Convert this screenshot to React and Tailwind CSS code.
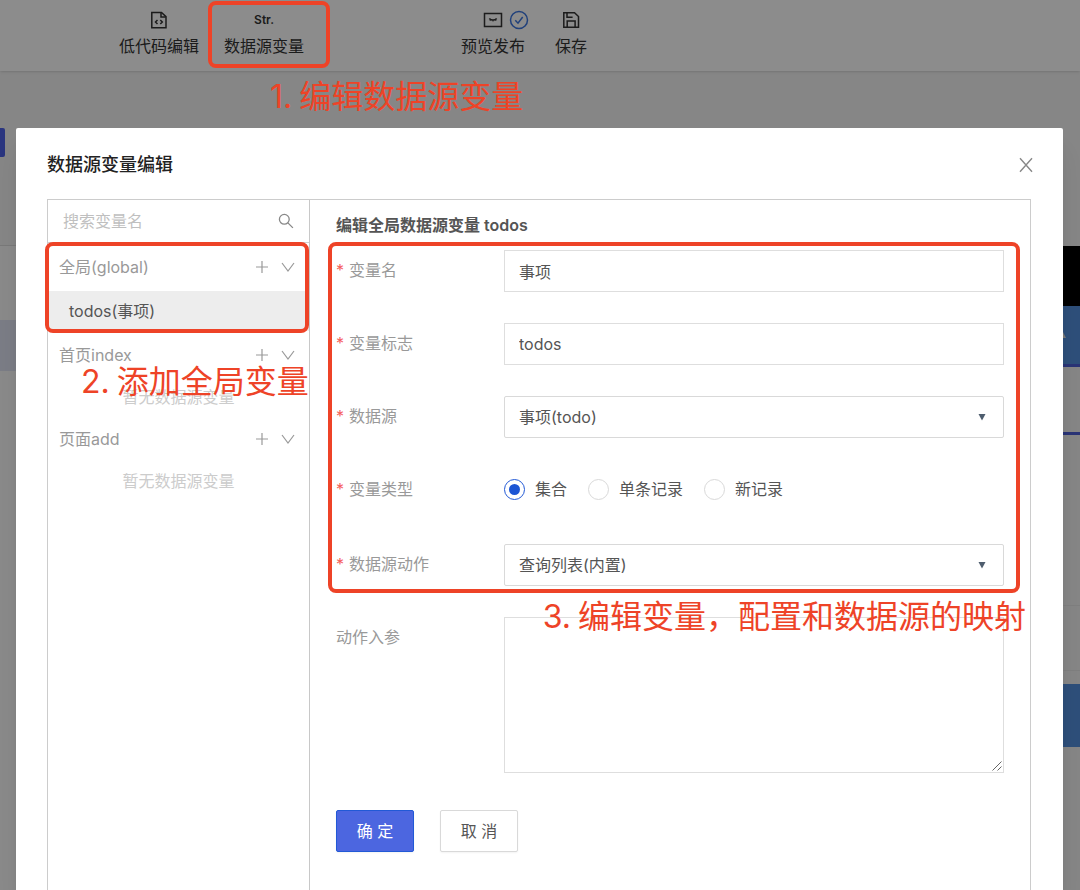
import { useState } from "react";

const RADIO_OPTIONS = [
  { value: "collection", label: "集合" },
  { value: "record", label: "单条记录" },
  { value: "new", label: "新记录" },
];

function CodeFileIcon() {
  return (
    <svg width="18" height="18" viewBox="0 0 18 18" fill="none" stroke="currentColor" strokeWidth="1.5">
      <path d="M1.800 1.500h9.700L16 5.700v11H1.800z" />
      <path d="M11 1.500V6h4.800" />
      <path d="M7.500 9 5.500 11l2 2M10.300 9l2 2-2 2" />
    </svg>
  );
}

function PreviewIcon() {
  return (
    <svg width="20" height="18" viewBox="0 0 20 18" fill="none" stroke="currentColor" strokeWidth="1.500">
      <path d="M1.500 2.500h17v13h-17z" />
      <path d="M6.300 7.400c1 1.200 2.200 1.700 3.700 1.700s2.700-.5 3.700-1.700" />
      <path d="M7.600 8.600 7 9.800M10 9v1.500M12.400 8.600l.6 1.200" strokeWidth="1" />
    </svg>
  );
}

function PublishedIcon() {
  return (
    <svg width="20" height="20" viewBox="0 0 20 20" fill="none" stroke="#3b76e0" strokeWidth="1.500">
      <circle cx="10" cy="10" r="8.500" />
      <path d="m6.300 10.300 2.700 2.900 4.700-6.200" />
    </svg>
  );
}

function SaveIcon() {
  return (
    <svg width="18" height="18" viewBox="0 0 18 18" fill="none" stroke="currentColor" strokeWidth="1.500">
      <path d="M1.800 1.700h10.700l4 3.800v10.800H1.800z" />
      <path d="M5.200 16.300V10h7.900v6.300M5 1.700v4.500h5.600" />
    </svg>
  );
}

function PlusIcon() {
  return (
    <svg width="14" height="14" viewBox="0 0 14 14" fill="none" stroke="currentColor" strokeWidth="1.200">
      <path d="M7 1v12M1 7h12" />
    </svg>
  );
}

function ChevronIcon() {
  return (
    <svg width="14" height="14" viewBox="0 0 14 14" fill="none" stroke="currentColor" strokeWidth="1.200">
      <path d="m1 3 6 8 6-8" />
    </svg>
  );
}

function SearchIcon() {
  return (
    <svg width="16" height="16" viewBox="0 0 16 16" fill="none" stroke="currentColor" strokeWidth="1.300">
      <circle cx="6.300" cy="6.300" r="4.900" />
      <path d="m9.900 9.900 5 5" />
    </svg>
  );
}

function CloseIcon() {
  return (
    <svg width="16" height="16" viewBox="0 0 16 16" fill="none" stroke="currentColor" strokeWidth="1.400">
      <path d="m2 1.300 12 13.400M14 1.300 2 14.700" />
    </svg>
  );
}

function ToolbarButton({ icon, badge, label }) {
  return (
    <button type="button" className="flex flex-col items-center gap-1 whitespace-nowrap">
      <span className="relative flex h-5 items-center">
        {icon}
        {badge && <span className="absolute top-0 left-full ml-1.5">{badge}</span>}
      </span>
      <span className="leading-6">{label}</span>
    </button>
  );
}

function StepNote({ number, children }) {
  return (
    <p className="flex gap-[7px] text-[32px] leading-10 whitespace-nowrap text-[#ee4327]">
      <span>{number}.</span>
      <span>{children}</span>
    </p>
  );
}

function VariableGroup({ title, children }) {
  return (
    <section>
      <div className="flex h-12 items-center justify-between pr-[14px] pl-[11px] text-[#999]">
        <h3>{title}</h3>
        <div className="flex gap-3">
          <button type="button" aria-label={`添加 ${title}`}>
            <PlusIcon />
          </button>
          <button type="button" aria-label={`展开 ${title}`}>
            <ChevronIcon />
          </button>
        </div>
      </div>
      {children}
    </section>
  );
}

function EmptyHint() {
  return <p className="h-9 text-center leading-9 text-[#ccc]">暂无数据源变量</p>;
}

function FieldLabel({ htmlFor, required, children }) {
  return (
    <label htmlFor={htmlFor} className="w-[168px] shrink-0 leading-10 text-[#999]">
      {required && <span className="mr-[5px] text-[#f5605c]">*</span>}
      {children}
    </label>
  );
}

function SelectBox({ id, options }) {
  return (
    <div className="relative flex-1">
      <select
        id={id}
        className="h-[42px] w-full appearance-none rounded-xs border border-[#d9d9d9] bg-white px-[14px] outline-none"
      >
        {options.map((option) => (
          <option key={option}>{option}</option>
        ))}
      </select>
      <svg
        className="pointer-events-none absolute top-[18px] right-[18px]"
        width="8"
        height="7"
        viewBox="0 0 8 7"
        fill="#4e5d6e"
      >
        <path d="M.5 0h7L4 6.500z" />
      </svg>
    </div>
  );
}

// The editor page that sits under the modal mask
function EditorPage() {
  return (
    <div className="flex h-full flex-col bg-[#f4f4f4]">
      <header className="flex h-[71px] shrink-0 items-start bg-white pt-[10px] pl-[119px] text-[#333] shadow-sm">
        <ToolbarButton icon={<CodeFileIcon />} label="低代码编辑" />
        <div className="ml-[25px]">
          <ToolbarButton
            icon={<span className="text-xs font-semibold">Str.</span>}
            label="数据源变量"
          />
        </div>
        <div className="ml-[157px] flex gap-[30px]">
          <ToolbarButton icon={<PreviewIcon />} badge={<PublishedIcon />} label="预览发布" />
          <ToolbarButton icon={<SaveIcon />} label="保存" />
        </div>
      </header>
      <div className="flex flex-1 justify-between">
        <aside className="flex w-4 flex-col">
          <div className="mt-[57px] h-[29px] w-[5px] rounded-r-xs bg-[#4e62e8]" />
          <div className="mt-[88px] h-[75px] border-t border-[#ddd] bg-[#fcfcfc]" />
          <div className="h-[51px] bg-[#e0e3f4]" />
          <div className="flex-1 bg-[#fcfcfc]" />
        </aside>
        <aside className="flex w-[17px] flex-col">
          <div className="mt-[175px] h-[60px] bg-black" />
          <div className="flex h-[58px] items-center bg-[#5490df]">
            <svg width="3" height="8" viewBox="0 0 3 8" fill="#ddd">
              <path d="M0 1l3 6H0z" />
            </svg>
          </div>
          <div className="h-[71px] border-y-3 border-[#4e5fd8]" />
          <div className="mt-[170px] h-[66px] border-y border-[#e8e8e8]" />
          <div className="mt-[13px] h-[63px] bg-[#5490df]" />
        </aside>
      </div>
    </div>
  );
}

function Sidebar() {
  return (
    <aside className="w-[262px] shrink-0 border-r border-[#c8c8c8]">
      <div className="flex h-[43px] items-center border-b border-[#d0d0d0] px-[15px] text-[#888]">
        <input
          type="search"
          aria-label="搜索变量名"
          placeholder="搜索变量名"
          className="min-w-0 flex-1 outline-none placeholder:text-[#bfbfbf]"
        />
        <button type="button" aria-label="搜索">
          <SearchIcon />
        </button>
      </div>
      <div className="relative">
        <VariableGroup title="全局(global)">
          <button type="button" className="block h-10 w-full bg-[#ededed] pl-[21px] text-left text-[#555]">
            todos(事项)
          </button>
        </VariableGroup>
        <div className="pointer-events-none absolute -top-px right-0 -bottom-0.5 -left-[3px] rounded-lg border-4 border-[#ee4327]" />
      </div>
      <div className="relative">
        <VariableGroup title="首页index">
          <EmptyHint />
        </VariableGroup>
        <div className="pointer-events-none absolute top-[31px] left-[33px]">
          <StepNote number={2}>添加全局变量</StepNote>
        </div>
      </div>
      <VariableGroup title="页面add">
        <EmptyHint />
      </VariableGroup>
    </aside>
  );
}

function VariableForm() {
  const [type, setType] = useState("collection");

  return (
    <form className="min-w-0 flex-1 px-[26px]" onSubmit={(e) => e.preventDefault()}>
      <h3 className="h-[50px] leading-[50px] font-semibold">编辑全局数据源变量 todos</h3>

      <div className="relative flex flex-col gap-[31px]">
        <div className="flex">
          <FieldLabel htmlFor="name" required>变量名</FieldLabel>
          <input
            id="name"
            defaultValue="事项"
            className="h-[42px] min-w-0 flex-1 border border-[#dedede] px-[14px] outline-none"
          />
        </div>
        <div className="flex">
          <FieldLabel htmlFor="key" required>变量标志</FieldLabel>
          <input
            id="key"
            defaultValue="todos"
            className="h-[42px] min-w-0 flex-1 border border-[#dedede] px-[14px] outline-none"
          />
        </div>
        <div className="flex">
          <FieldLabel htmlFor="source" required>数据源</FieldLabel>
          <SelectBox id="source" options={["事项(todo)"]} />
        </div>
        <div className="flex h-11">
          <FieldLabel htmlFor="type-collection" required>变量类型</FieldLabel>
          <div className="flex h-10 items-center gap-[21px]">
            {RADIO_OPTIONS.map((option) => (
              <label key={option.value} className="flex items-center gap-[10px]">
                <input
                  type="radio"
                  name="type"
                  id={`type-${option.value}`}
                  checked={type === option.value}
                  onChange={() => setType(option.value)}
                  className="grid size-[21px] appearance-none place-items-center rounded-full border border-[#d9d9d9] before:size-[11px] before:rounded-full checked:border-[#2259d6] checked:before:bg-[#1c55d4]"
                />
                {option.label}
              </label>
            ))}
          </div>
        </div>
        <div className="flex">
          <FieldLabel htmlFor="action" required>数据源动作</FieldLabel>
          <SelectBox id="action" options={["查询列表(内置)"]} />
        </div>
        <div className="pointer-events-none absolute -top-2 -right-4 -bottom-[7px] -left-2 rounded-lg border-4 border-[#ee4327]" />
      </div>

      <div className="relative mt-[31px] flex">
        <FieldLabel htmlFor="params">动作入参</FieldLabel>
        <textarea
          id="params"
          className="h-[156px] min-w-0 flex-1 resize-none border border-[#dedede] px-[14px] py-2 outline-none"
        />
        <svg
          className="pointer-events-none absolute right-0.5 bottom-0.5"
          width="10"
          height="10"
          viewBox="0 0 10 10"
          stroke="#666"
        >
          <path d="M.5 9.500l9-9M5.500 9.500l4-4" />
        </svg>
        <div className="pointer-events-none absolute -top-5 -right-[22px]">
          <StepNote number={3}>编辑变量，配置和数据源的映射</StepNote>
        </div>
      </div>

      <div className="mt-[37px] flex gap-[26px]">
        <button
          type="submit"
          className="h-[42px] w-[78px] rounded-xs border border-[#2259d6] bg-[#4c66e0] text-white shadow-xs"
        >
          确 定
        </button>
        <button type="button" className="h-[42px] w-[78px] rounded-xs border border-[#d9d9d9] bg-white shadow-xs">
          取 消
        </button>
      </div>
    </form>
  );
}

export default function App() {
  return (
    <div className="relative h-screen overflow-hidden font-['Inter','Noto_Sans_CJK_SC',sans-serif] text-base text-[#555]">
      <EditorPage />

      <div className="absolute inset-0 bg-black/45 pt-32 pr-[17px] pl-4">
        <div
          role="dialog"
          aria-labelledby="dialog-title"
          className="flex h-full flex-col rounded-t-xs bg-white pr-8 pl-[31px] shadow-xl"
        >
          <div className="flex h-[71px] shrink-0 items-center justify-between pt-0.5">
            <h2 id="dialog-title" className="text-lg font-medium text-[#222]">
              数据源变量编辑
            </h2>
            <button type="button" aria-label="关闭" className="-mr-1 p-px text-[#888]">
              <CloseIcon />
            </button>
          </div>
          <div className="flex flex-1 border border-b-0 border-[#ccc]">
            <Sidebar />
            <VariableForm />
          </div>
        </div>
      </div>

      {/* Step 1 note, drawn over the mask */}
      <div className="pointer-events-none absolute top-px left-[208px] h-[67px] w-[122px] rounded-lg border-4 border-[#ee4327]" />
      <div className="pointer-events-none absolute top-[77px] left-[270px]">
        <StepNote number={1}>编辑数据源变量</StepNote>
      </div>
    </div>
  );
}
